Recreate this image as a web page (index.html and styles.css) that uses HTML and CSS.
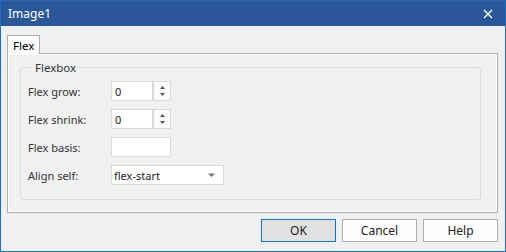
FILE: index.html
```html
<!DOCTYPE html>
<html>
<head>
<meta charset="utf-8">
<link rel="stylesheet" href="styles.css">
</head>
<body>
<div class="window">
  <div class="titlebar">
    <span class="title">Image1</span>
    <svg class="close" width="10" height="10" viewBox="0 0 10 10"><path d="M1 1 L9 9 M9 1 L1 9" stroke="#fff" stroke-width="1.4"/></svg>
  </div>
  <div class="content">
    <div class="tabs">
      <div class="tab">Flex</div>
    </div>
    <div class="panel">
      <fieldset class="group">
        <legend>Flexbox</legend>
        <div class="form">
          <label>Flex grow:</label>
          <div class="spin">
            <div class="spin-text">0</div>
            <div class="spin-btns">
              <svg width="7" height="5" viewBox="0 0 7 5"><path d="M3.5 1 L6 4 L1 4 Z" fill="#555"/></svg>
              <svg width="7" height="5" viewBox="0 0 7 5"><path d="M1 1 H6 L3.5 4 Z" fill="#555"/></svg>
            </div>
          </div>
          <label>Flex shrink:</label>
          <div class="spin">
            <div class="spin-text">0</div>
            <div class="spin-btns">
              <svg width="7" height="5" viewBox="0 0 7 5"><path d="M3.5 1 L6 4 L1 4 Z" fill="#555"/></svg>
              <svg width="7" height="5" viewBox="0 0 7 5"><path d="M1 1 H6 L3.5 4 Z" fill="#555"/></svg>
            </div>
          </div>
          <label>Flex basis:</label>
          <div class="textbox"></div>
          <label>Align self:</label>
          <div class="select">
            <span>flex-start</span>
            <svg width="7" height="5" viewBox="0 0 7 5"><path d="M0.5 0.5 H6.5 V1.5 H0.5 Z M1 1.5 H6 L3.5 4 Z" fill="#777"/></svg>
          </div>
        </div>
      </fieldset>
    </div>
    <div class="buttons">
      <button class="btn default">OK</button>
      <button class="btn">Cancel</button>
      <button class="btn">Help</button>
    </div>
  </div>
</div>
</body>
</html>
```

FILE: styles.css
```css
* { box-sizing: border-box; }
html, body { margin: 0; padding: 0; }
body {
  width: 506px;
  height: 252px;
  font-family: "Noto Sans", "Open Sans", sans-serif;
  font-size: 11px;
  color: #222;
  background: #f0f0f0;
}
.window {
  width: 506px;
  height: 252px;
  border: 1px solid #1a6fc9;
  border-top: none;
  display: flex;
  flex-direction: column;
  background: #f0f0f0;
}
.titlebar {
  height: 26px;
  background: #2b579a;
  border-top: 1px solid #2c62b0;
  display: flex;
  align-items: center;
  justify-content: space-between;
  padding: 0 12px 0 7px;
  color: #fff;
  font-size: 12px;
}
.close { display: block; }
.content {
  flex: 1;
  display: flex;
  flex-direction: column;
  padding: 9px 7px 9px 6px;
}
.tabs { display: flex; height: 18px; }
.tab {
  width: 33px;
  height: 19px;
  border: 1px solid #adadad;
  border-bottom: none;
  background: #fbfbfb;
  padding: 2px 0 0 5px;
  position: relative;
  z-index: 1;
  font-size: 11.5px;
  color: #000;
}
.panel {
  height: 160px;
  border: 1px solid #adadad;
  box-shadow: inset 1px 1px 0 #fff, inset -1px -1px 0 #fff;
  padding: 0 16px 0 12px;
}
.group {
  margin: 6px 0 0 0;
  height: 140px;
  border: 1px solid #dcdcdc;
  border-radius: 3px;
  padding: 6px 0 0 7px;
}
.group legend {
  padding: 0 2px;
  margin-left: 5px;
  color: #333;
  font-size: 11.5px;
}
.form {
  display: grid;
  grid-template-columns: 83px auto;
  grid-auto-rows: 20px;
  row-gap: 8px;
  align-items: center;
  justify-items: start;
}
.form label { color: #333; }
.spin { display: flex; width: 60px; height: 20px; }
.spin-text {
  width: 42px;
  height: 20px;
  border: 1px solid #d9d9d9;
  background: #fff;
  padding: 2px 0 0 3px;
}
.spin-btns {
  width: 18px;
  height: 20px;
  border: 1px solid #d9d9d9;
  border-left-width: 1px;
  background: #fafafa;
  display: flex;
  flex-direction: column;
  align-items: center;
  justify-content: center;
  gap: 2px;
}
.spin-btns svg { display: block; }
.textbox {
  width: 60px;
  height: 20px;
  border: 1px solid #d9d9d9;
  background: #fff;
}
.select {
  width: 113px;
  height: 20px;
  border: 1px solid #d9d9d9;
  background: #fff;
  display: flex;
  align-items: center;
  justify-content: space-between;
  padding: 0 8px 0 2px;
}
.select svg { display: block; }
.buttons {
  display: flex;
  justify-content: flex-end;
  gap: 6px;
  margin-top: 6px;
}
.btn {
  width: 75px;
  height: 23px;
  font-family: inherit;
  font-size: 12px;
  color: #222;
  background: #fdfdfd;
  border: 1px solid #adadad;
  padding: 0;
}
.btn.default {
  background: #e1e1e1;
  border-color: #0078d7;
}
```
